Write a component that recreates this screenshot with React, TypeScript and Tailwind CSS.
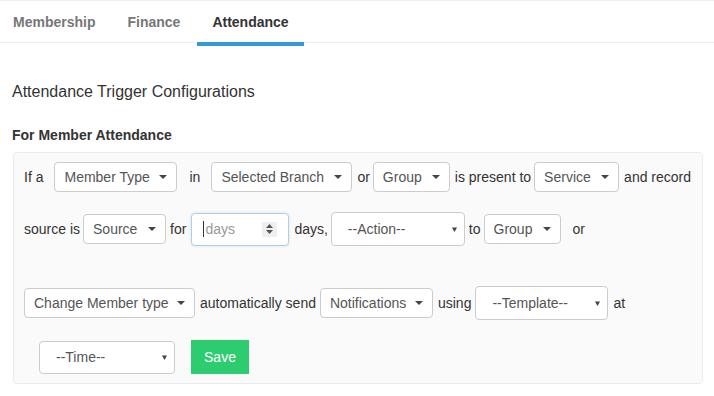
import React from 'react';

// bootstrap-select style dropdown button
const Pick: React.FC<{ label: string; className: string }> = ({ label, className }) => (
  <div
    className={`flex h-[30px] shrink-0 items-center justify-between rounded-[4px] border border-[#ccc] bg-white pl-[9px] pr-[9px] text-[14px] text-[#555] ${className}`}
  >
    <span>{label}</span>
    <span className="h-0 w-0 border-x-[4px] border-t-[4px] border-x-transparent border-t-[#444]" />
  </div>
);

// plain native-looking select
const NativeSelect: React.FC<{ label: string; className: string }> = ({ label, className }) => (
  <div
    className={`flex shrink-0 items-center justify-between rounded-[4px] border border-[#ccc] bg-white pl-[16px] pr-[7px] text-[14px] text-[#555] ${className}`}
  >
    <span>{label}</span>
    <svg width="5" height="5" viewBox="0 0 5 5">
      <polygon points="0,0.5 5,0.5 2.5,5" fill="#444" />
    </svg>
  </div>
);

const Tab: React.FC<{ label: string; active?: boolean }> = ({ label, active }) => (
  <div
    className={`flex h-[45px] items-center border-b-4 px-[15px] pt-px text-[14px] font-bold ${
      active ? 'border-[#3498db] text-[#333]' : 'border-transparent text-[#777]'
    }`}
  >
    {label}
  </div>
);

export default function App() {
  return (
    <div className="h-[396px] w-[714px] overflow-hidden bg-white font-['Liberation_Sans',Arial,sans-serif] text-[#333]">
      <div className="h-[43px] border-y border-[#eee]">
        <div className="-ml-[2px] flex gap-[2px]">
          <Tab label="Membership" />
          <Tab label="Finance" />
          <Tab label="Attendance" active />
        </div>
      </div>

      <div className="pl-[12px]">
        <h3 className="mt-[38px] text-[16px] leading-[22px] text-[#333]">Attendance Trigger Configurations</h3>
        <h4 className="mt-[23px] text-[14px] font-bold leading-[18px] text-[#333]">For Member Attendance</h4>

        <div className="ml-[1px] mt-[8px] w-[690px] rounded-[4px] border border-[#e8ecec] bg-[#fafafa] pb-[9px] pl-[10px] pt-[9px] text-[14px]">
          {/* row 1 */}
          <div className="flex h-[30px] items-center whitespace-nowrap">
            <span>If a</span>
            <Pick label="Member Type" className="ml-[11px] w-[123px]" />
            <span className="ml-[12px]">in</span>
            <Pick label="Selected Branch" className="ml-[11px] w-[141px]" />
            <span className="ml-[5px]">or</span>
            <Pick label="Group" className="ml-[3px] w-[77px]" />
            <span className="ml-[5px]">is present to</span>
            <Pick label="Service" className="ml-[3px] w-[85px]" />
            <span className="ml-[5px]">and record</span>
          </div>

          {/* row 2 */}
          <div className="mt-[20px] flex h-[34px] items-center whitespace-nowrap">
            <span>source is</span>
            <Pick label="Source" className="ml-[3px] w-[83px]" />
            <span className="ml-[4px]">for</span>
            <div className="ml-[5px] flex h-[33px] w-[98px] shrink-0 items-center rounded-[4px] border border-[#b4cde2] bg-white pl-[11px] shadow-[0_0_3px_rgba(102,175,233,0.3)]">
              <span className="h-[16px] w-px bg-[#333]" />
              <span className="ml-[1px] text-[#999]">days</span>
              <div className="ml-auto mr-[11px] flex h-[15px] w-[15px] flex-col items-center justify-center gap-[2px] bg-[#efefef]">
                <svg width="7" height="4" viewBox="0 0 7 4">
                  <polygon points="3.5,0 7,4 0,4" fill="#555" />
                </svg>
                <svg width="7" height="4" viewBox="0 0 7 4">
                  <polygon points="0,0 7,0 3.5,4" fill="#555" />
                </svg>
              </div>
            </div>
            <span className="ml-[5px]">days,</span>
            <NativeSelect label="--Action--" className="ml-[3px] h-[34px] w-[134px]" />
            <span className="ml-[4px]">to</span>
            <Pick label="Group" className="ml-[3px] w-[77px]" />
            <span className="ml-[12px]">or</span>
          </div>

          {/* row 3 */}
          <div className="mt-[40px] flex h-[34px] items-center whitespace-nowrap">
            <Pick label="Change Member type" className="w-[171px]" />
            <span className="ml-[5px]">automatically send</span>
            <Pick label="Notifications" className="ml-[4px] w-[113px]" />
            <span className="ml-[5px]">using</span>
            <NativeSelect label="--Template--" className="ml-[4px] h-[34px] w-[133px]" />
            <span className="ml-[5px]">at</span>
          </div>

          {/* row 4 */}
          <div className="mt-[20px] flex h-[34px] items-center">
            <NativeSelect label="--Time--" className="ml-[15px] h-[33px] w-[136px]" />
            <button className="ml-[16px] h-[34px] w-[58px] bg-[#2ecc71] text-[14px] text-white">Save</button>
          </div>
        </div>
      </div>
    </div>
  );
}
